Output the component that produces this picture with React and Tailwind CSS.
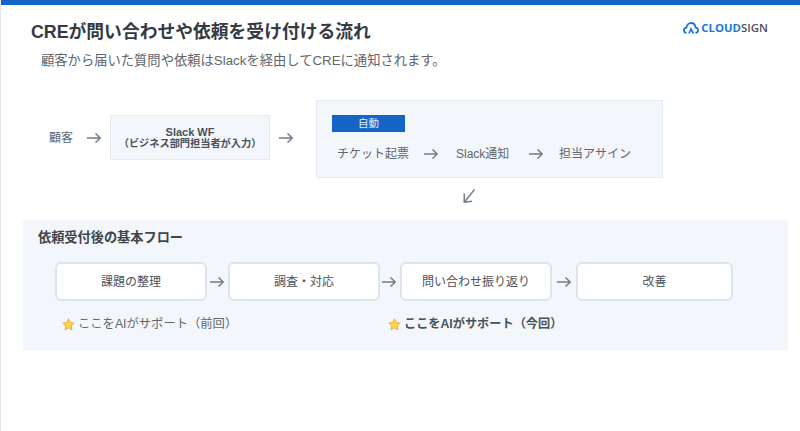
const FONT = "font-['Liberation_Sans','Noto_Sans_CJK_JP',sans-serif]";

function Arrow({ className = '' }) {
  return (
    <svg viewBox="0 0 14 12" className={`w-[14px] h-3 shrink-0 text-[#737b8c] ${className}`} fill="none" stroke="currentColor" strokeWidth="1.5">
      <path d="M0 6H13.200M8.500 1.500 13.200 6l-4.700 4.500" />
    </svg>
  );
}

function Star() {
  return (
    <svg viewBox="0 0 24 24" className="w-[13px] h-[13px] shrink-0">
      <path d="M12 1.500l3.200 6.800 7.300 1-5.300 5.200 1.300 7.500L12 18.400l-6.500 3.600 1.300-7.500L1.500 9.300l7.300-1z" fill="#fcd34d" stroke="#f0a52a" strokeWidth="1.500" strokeLinejoin="round" />
    </svg>
  );
}

function Logo() {
  return (
    <div className="flex items-center gap-[2px]">
      <svg viewBox="0 0 16 12" className="w-4 h-3 text-[#1d77d8]" fill="none" stroke="currentColor" strokeWidth="1.800">
        <path d="M3.500 10.800C1.800 10.800 1 9.400 1 8.200c0-1.400 1-2.500 2.400-2.600C3.700 3 5.700 1 8 1c2.400 0 4.300 1.800 4.600 4.600C14 5.700 15 6.800 15 8.200c0 1.300-.9 2.600-2.500 2.600" />
        <path d="M6 11.500l2-4.500 2.500 4.500" />
      </svg>
      <span className="font-['Open_Sans',sans-serif] text-[11.400px] leading-none font-bold text-[#1d77d8]">
        CLOUD<span className="font-semibold text-[#4a4f57]">SIGN</span>
      </span>
    </div>
  );
}

function Step({ label, className }) {
  return (
    <div className={`h-[39px] flex items-center justify-center bg-white border-2 border-[#dce4ef] rounded-[6px] text-xs text-[#4b5159] ${className}`}>
      {label}
    </div>
  );
}

export default function App() {
  return (
    <div className={`${FONT} w-[800px] h-[431px] overflow-hidden bg-white flex flex-col border-l border-[#e4e4e4]`}>
      <div className="h-[5px] -ml-px bg-[#1565c6] shrink-0" />

      {/* Header */}
      <header className="flex justify-between pl-[30px] pr-[31px] pt-4">
        <h1 className="text-[17.800px] leading-[22px] font-bold text-[#343a43]">CREが問い合わせや依頼を受け付ける流れ</h1>
        <div className="pt-px pr-px"><Logo /></div>
      </header>
      <p className="pl-10 mt-2 text-[13.300px] leading-[20px] text-[#60666e]">顧客から届いた質問や依頼はSlackを経由してCREに通知されます。</p>

      {/* Intake flow */}
      <section className="flex items-start pl-12 mt-[29px]">
        <div className="flex items-center h-[45px] mt-[15px]">
          <span className="text-xs text-[#60666e]">顧客</span>
          <Arrow className="ml-[14px]" />
          <div className="ml-[9px] w-[160px] h-[45px] flex flex-col items-center justify-center bg-[#f3f6fa] border border-[#e6ebf3] leading-[12px] font-bold text-[#4b5159]">
            <span className="text-[11px]">Slack WF</span>
            <span className="text-[10.200px]">（ビジネス部門担当者が入力）</span>
          </div>
          <Arrow className="ml-[9px]" />
        </div>
        <div className="ml-[23px] w-[347px] h-[78px] bg-[#f3f6fa] border border-[#e6ebf3] pl-[15px] pt-[14px]">
          <div className="w-[73px] h-[17px] flex items-center justify-center bg-[#1565c6] text-[10.500px] text-[#e4ecf8]">自動</div>
          <div className="flex items-center mt-[14px] pl-[5px] text-xs text-[#60666e]">
            <span className="w-[72px]">チケット起票</span>
            <Arrow className="ml-[15px]" />
            <span className="ml-[18px] w-[55px]">Slack通知</span>
            <Arrow className="ml-[18px]" />
            <span className="ml-4">担当アサイン</span>
          </div>
        </div>
      </section>

      <div className="pl-[462px] mt-[11px] h-[31px]">
        <svg viewBox="0 0 12 14" className="w-3 h-[14px] text-[#737b8c]" fill="none" stroke="currentColor" strokeWidth="1.500">
          <path d="M11.500 0.500 1.500 13M1.300 4.500 1.200 13.200 9 12.200" />
        </svg>
      </div>

      {/* Basic flow */}
      <section className="ml-[22px] w-[765px] h-[130px] bg-[#f3f6fa] pl-[15px] pt-[9px]">
        <h2 className="text-[13.200px] leading-[18px] font-bold text-[#40464e]">依頼受付後の基本フロー</h2>
        <div className="flex items-center pl-[17px] mt-[15px]">
          <Step label="課題の整理" className="w-[152px]" />
          <Arrow className="ml-[3px] mr-1" />
          <Step label="調査・対応" className="w-[152px]" />
          <Arrow className="ml-[2px] mr-1" />
          <Step label="問い合わせ振り返り" className="w-[152px]" />
          <Arrow className="ml-[5px] mr-[5px]" />
          <Step label="改善" className="w-[157px]" />
        </div>
        <div className="flex mt-[13px] pl-[24px] leading-[20px] text-[#60666e]">
          <div className="w-[326px] flex items-center gap-[3px] text-[12.300px]"><Star />ここをAIがサポート（前回）</div>
          <div className="flex items-center gap-[3px] text-[12.200px] font-bold text-[#4b5159]"><Star />ここをAIがサポート（今回）</div>
        </div>
      </section>
    </div>
  );
}
